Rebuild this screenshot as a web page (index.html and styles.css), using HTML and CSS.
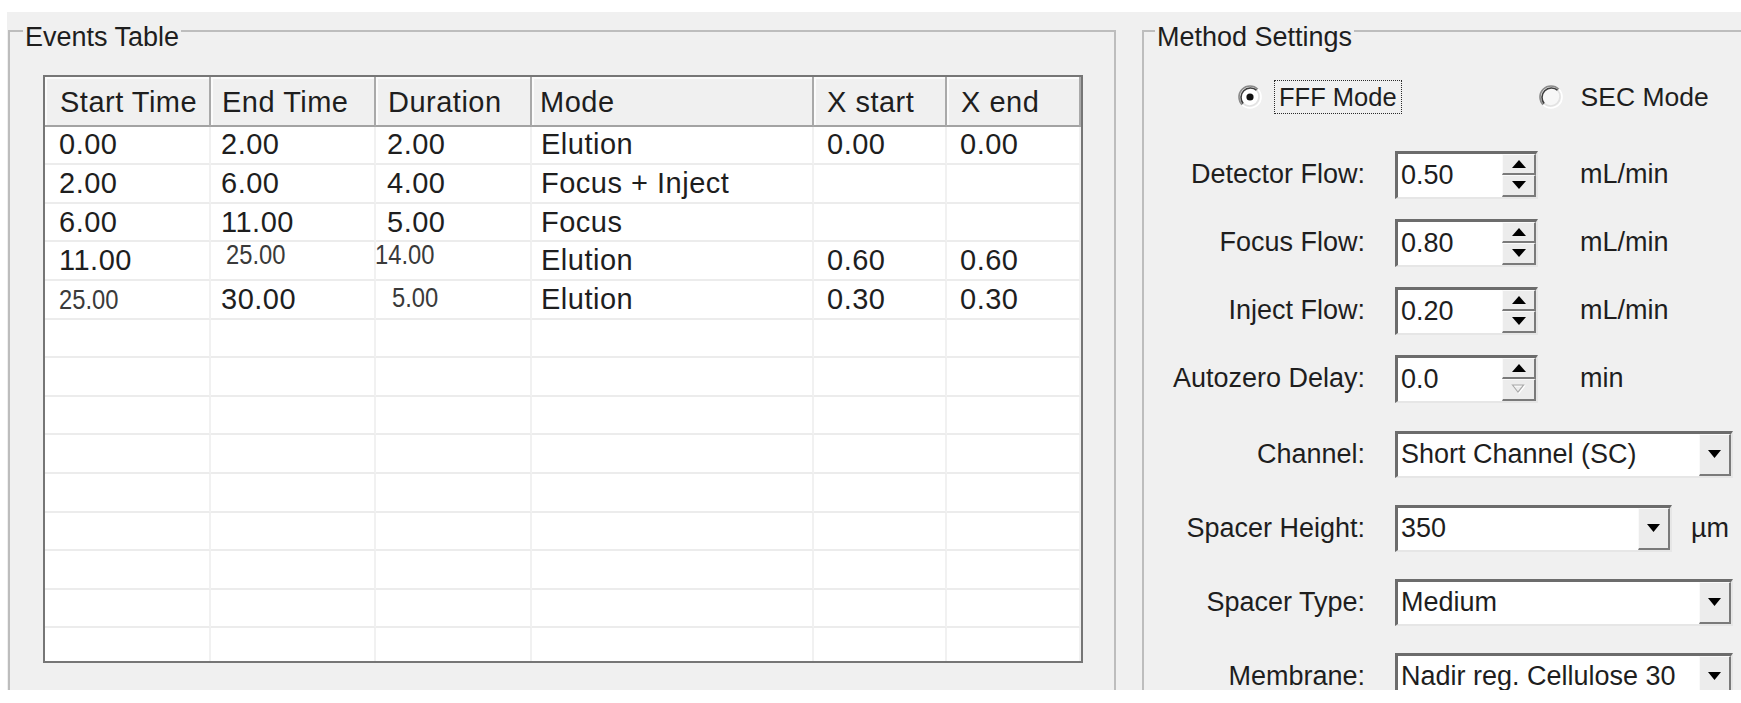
FILE: index.html
```html
<!DOCTYPE html>
<html>
<head>
<meta charset="utf-8">
<title>Method</title>
<link rel="stylesheet" href="styles.css">
</head>
<body>
<div class="window">
  <fieldset class="group events">
    <legend>Events Table</legend>
    <div class="listview">
      <table class="grid">
        <colgroup>
          <col class="c1"><col class="c2"><col class="c3"><col class="c4"><col class="c5"><col class="c6">
        </colgroup>
        <thead>
          <tr><th>Start Time</th><th>End Time</th><th>Duration</th><th>Mode</th><th>X start</th><th>X end</th></tr>
        </thead>
        <tbody>
          <tr><td>0.00</td><td>2.00</td><td>2.00</td><td>Elution</td><td>0.00</td><td>0.00</td></tr>
          <tr><td>2.00</td><td>6.00</td><td>4.00</td><td>Focus + Inject</td><td></td><td></td></tr>
          <tr><td>6.00</td><td>11.00</td><td>5.00</td><td>Focus</td><td></td><td></td></tr>
          <tr><td>11.00</td><td><span class="edit up nudge-r">25.00</span></td><td><span class="edit up nudge-l">14.00</span></td><td>Elution</td><td>0.60</td><td>0.60</td></tr>
          <tr><td><span class="edit">25.00</span></td><td>30.00</td><td><span class="edit up-s nudge-r">5.00</span></td><td>Elution</td><td>0.30</td><td>0.30</td></tr>
          <tr><td></td><td></td><td></td><td></td><td></td><td></td></tr>
          <tr><td></td><td></td><td></td><td></td><td></td><td></td></tr>
          <tr><td></td><td></td><td></td><td></td><td></td><td></td></tr>
          <tr><td></td><td></td><td></td><td></td><td></td><td></td></tr>
          <tr><td></td><td></td><td></td><td></td><td></td><td></td></tr>
          <tr><td></td><td></td><td></td><td></td><td></td><td></td></tr>
          <tr><td></td><td></td><td></td><td></td><td></td><td></td></tr>
          <tr><td></td><td></td><td></td><td></td><td></td><td></td></tr>
          <tr><td></td><td></td><td></td><td></td><td></td><td></td></tr>
        </tbody>
      </table>
    </div>
  </fieldset>

  <fieldset class="group method">
    <legend>Method Settings</legend>
    <div class="radios">
      <svg class="radio" viewBox="0 0 24 24" width="24" height="24">
        <circle cx="12" cy="12" r="9" fill="#fff"/>
        <path d="M4.2 19.8 A11 11 0 0 1 19.8 4.2" fill="none" stroke="#8a8a8a" stroke-width="1.6"/>
        <path d="M19.8 4.2 A11 11 0 0 1 4.2 19.8" fill="none" stroke="#ffffff" stroke-width="1.6"/>
        <path d="M5.3 18.7 A9.5 9.5 0 0 1 18.7 5.3" fill="none" stroke="#3c3c3c" stroke-width="1.6"/>
        <path d="M18.7 5.3 A9.5 9.5 0 0 1 5.3 18.7" fill="none" stroke="#e2e2e2" stroke-width="1.6"/>
        <circle cx="12" cy="12" r="3.6" fill="#111"/>
      </svg>
      <span class="rlabel focus">FFF Mode</span>
      <svg class="radio sec" viewBox="0 0 24 24" width="24" height="24">
        <circle cx="12" cy="12" r="9" fill="#f7f7f7"/>
        <path d="M4.2 19.8 A11 11 0 0 1 19.8 4.2" fill="none" stroke="#8a8a8a" stroke-width="1.6"/>
        <path d="M19.8 4.2 A11 11 0 0 1 4.2 19.8" fill="none" stroke="#ffffff" stroke-width="1.6"/>
        <path d="M5.3 18.7 A9.5 9.5 0 0 1 18.7 5.3" fill="none" stroke="#3c3c3c" stroke-width="1.6"/>
        <path d="M18.7 5.3 A9.5 9.5 0 0 1 5.3 18.7" fill="none" stroke="#e2e2e2" stroke-width="1.6"/>
      </svg>
      <span class="rlabel plain">SEC Mode</span>
    </div>

    <div class="rows spins">
      <div class="row">
        <span class="lbl">Detector Flow:</span>
        <div class="spin">
          <span class="val">0.50</span>
          <div class="btns">
            <span class="sbtn"><svg width="14" height="8" viewBox="0 0 14 8"><polygon points="0,8 7,0 14,8" fill="#000"/></svg></span>
            <span class="sbtn"><svg width="14" height="8" viewBox="0 0 14 8"><polygon points="0,0 7,8 14,0" fill="#000"/></svg></span>
          </div>
        </div>
        <span class="unit">mL/min</span>
      </div>
      <div class="row">
        <span class="lbl">Focus Flow:</span>
        <div class="spin">
          <span class="val">0.80</span>
          <div class="btns">
            <span class="sbtn"><svg width="14" height="8" viewBox="0 0 14 8"><polygon points="0,8 7,0 14,8" fill="#000"/></svg></span>
            <span class="sbtn"><svg width="14" height="8" viewBox="0 0 14 8"><polygon points="0,0 7,8 14,0" fill="#000"/></svg></span>
          </div>
        </div>
        <span class="unit">mL/min</span>
      </div>
      <div class="row">
        <span class="lbl">Inject Flow:</span>
        <div class="spin">
          <span class="val">0.20</span>
          <div class="btns">
            <span class="sbtn"><svg width="14" height="8" viewBox="0 0 14 8"><polygon points="0,8 7,0 14,8" fill="#000"/></svg></span>
            <span class="sbtn"><svg width="14" height="8" viewBox="0 0 14 8"><polygon points="0,0 7,8 14,0" fill="#000"/></svg></span>
          </div>
        </div>
        <span class="unit">mL/min</span>
      </div>
      <div class="row">
        <span class="lbl">Autozero Delay:</span>
        <div class="spin">
          <span class="val">0.0</span>
          <div class="btns">
            <span class="sbtn"><svg width="14" height="8" viewBox="0 0 14 8"><polygon points="0,8 7,0 14,8" fill="#000"/></svg></span>
            <span class="sbtn"><svg width="15" height="10" viewBox="0 0 15 10"><polygon points="1.5,1 7,8 12.5,1" fill="none" stroke="#ffffff" stroke-width="1.2" transform="translate(1,1)"/><polygon points="1.5,1 7,8 12.5,1" fill="none" stroke="#a8a8a8" stroke-width="1.2"/></svg></span>
          </div>
        </div>
        <span class="unit">min</span>
      </div>
    </div>

    <div class="rows combos">
      <div class="row">
        <span class="lbl">Channel:</span>
        <div class="combo">
          <span class="val">Short Channel (SC)</span>
          <span class="dbtn"><svg width="13" height="8" viewBox="0 0 13 8"><polygon points="0,0 6.5,8 13,0" fill="#000"/></svg></span>
        </div>
      </div>
      <div class="row">
        <span class="lbl">Spacer Height:</span>
        <div class="combo short">
          <span class="val">350</span>
          <span class="dbtn"><svg width="13" height="8" viewBox="0 0 13 8"><polygon points="0,0 6.5,8 13,0" fill="#000"/></svg></span>
        </div>
        <span class="unit um">µm</span>
      </div>
      <div class="row">
        <span class="lbl">Spacer Type:</span>
        <div class="combo">
          <span class="val">Medium</span>
          <span class="dbtn"><svg width="13" height="8" viewBox="0 0 13 8"><polygon points="0,0 6.5,8 13,0" fill="#000"/></svg></span>
        </div>
      </div>
      <div class="row">
        <span class="lbl">Membrane:</span>
        <div class="combo">
          <span class="val">Nadir reg. Cellulose 30</span>
          <span class="dbtn"><svg width="13" height="8" viewBox="0 0 13 8"><polygon points="0,0 6.5,8 13,0" fill="#000"/></svg></span>
        </div>
      </div>
    </div>
  </fieldset>
</div>
</body>
</html>
```

FILE: styles.css
```css
html, body {
  margin: 0;
  padding: 0;
  width: 1741px;
  height: 703px;
  overflow: hidden;
  background: #ffffff;
}

body {
  font-family: "Liberation Sans", Arial, sans-serif;
  color: #1e1e1e;
}

.window {
  margin: 12px 0 0 7px;
  height: 678px;
  background: #f0f0f0;
  display: flex;
  align-items: flex-start;
  overflow: hidden;
}

.group {
  margin: -2px 0 0 0;
  padding: 0;
  border: 2px solid #bdbdbd;
  box-sizing: border-box;
  flex-shrink: 0;
  min-inline-size: 0;
  height: 760px;
}

.group > legend {
  font-size: 27px;
  line-height: 30px;
  padding: 11.6px 2px 0 2px;
  color: #1e1e1e;
}

.events {
  margin-left: 1px;
  width: 1108px;
  padding-left: 33px;
}

.events > legend {
  margin-left: -20px;
}

.method {
  margin-left: 26px;
  width: 660px;
}

.method > legend {
  margin-left: 11px;
}

/* ---------- list view ---------- */
.listview {
  margin-top: 23px;
  width: 1040px;
  height: 588px;
  box-sizing: border-box;
  border: 2px solid #767676;
  background: #ffffff;
  overflow: hidden;
}

.grid {
  border-collapse: separate;
  border-spacing: 0;
  table-layout: fixed;
  width: 1036px;
  font-size: 29px;
  letter-spacing: 0.5px;
}

.c1 { width: 166px; }
.c2 { width: 165px; }
.c3 { width: 156px; }
.c4 { width: 282px; }
.c5 { width: 133px; }
.c6 { width: 134px; }

.grid th {
  height: 45px;
  padding: 3px 0 0 12px;
  background: #f0f0f0;
  border-right: 2px solid #a9a9a9;
  border-bottom: 2px solid #a3a3a3;
  box-shadow: inset 2px 2px 0 #fbfbfb;
  font-weight: normal;
  text-align: left;
  white-space: nowrap;
  overflow: hidden;
}

.grid th:nth-child(1) { padding-left: 15px; }
.grid th:nth-child(2) { padding-left: 11px; }
.grid th:nth-child(3) { padding-left: 12px; }
.grid th:nth-child(4) { padding-left: 8px; }
.grid th:nth-child(5) { padding-left: 13px; }
.grid th:nth-child(6) { padding-left: 14px; }

.grid td {
  height: 36.6px;
  padding: 0 0 0 13px;
  border-bottom: 2px solid #ececec;
  border-right: 2px solid #f1f1f1;
  white-space: nowrap;
  vertical-align: middle;
}

.grid td:nth-child(1) { padding-left: 14px; }
.grid td:nth-child(2) { padding-left: 10px; }
.grid td:nth-child(3) { padding-left: 11px; }
.grid td:nth-child(4) { padding-left: 9px; }

.edit {
  display: inline-block;
  color: #3a3a3a;
  letter-spacing: 0;
  transform: scaleX(0.88);
  transform-origin: left center;
  font-size: 27px;
}

.edit.up { transform: translateY(-6px) scaleX(0.88); }
.edit.up-s { transform: translateY(-2px) scaleX(0.88); }
.nudge-r { margin-left: 5px; }
.nudge-l { margin-left: -12px; }

/* ---------- method settings ---------- */
.radios {
  display: flex;
  align-items: center;
  height: 34px;
  margin-top: 28px;
  padding-left: 94px;
  font-size: 25.5px;
}

.radio {
  flex-shrink: 0;
  display: block;
}

.radio.sec {
  margin-left: 137px;
}

.rlabel {
  margin-left: 12px;
  padding: 0 4px;
  line-height: 32px;
  border: 1px dotted #2a2a2a;
  white-space: nowrap;
}

.rlabel.plain {
  border-color: transparent;
  margin-left: 13px;
  font-size: 26.5px;
}

.rows {
  display: flex;
  flex-direction: column;
}

.spins {
  gap: 20px;
  margin-top: 37px;
}

.combos {
  gap: 27px;
  margin-top: 28px;
}

.row {
  display: flex;
  align-items: center;
  font-size: 27px;
  white-space: nowrap;
}

.lbl {
  width: 221px;
  flex-shrink: 0;
  text-align: right;
  margin-right: 30px;
}

.spin,
.combo {
  display: flex;
  align-items: stretch;
  box-sizing: border-box;
  background: #ffffff;
  border-style: solid;
  border-width: 3px 2px 2px 3px;
  border-color: #6c6c6c #e6e6e6 #e6e6e6 #6c6c6c;
  flex-shrink: 0;
}

.spin {
  width: 143px;
  height: 48px;
}

.combo {
  width: 338px;
  height: 47px;
}

.combo.short {
  width: 277px;
}

.val {
  flex: 1;
  padding-left: 3px;
  display: flex;
  align-items: center;
  overflow: hidden;
}

.btns {
  width: 34px;
  display: flex;
  flex-direction: column;
}

.sbtn {
  flex: 1;
  display: flex;
  align-items: center;
  justify-content: center;
  background: #ececec;
  border-style: solid;
  border-width: 1px 2px 2px 1px;
  border-color: #fafafa #7a7a7a #7a7a7a #fafafa;
}

.dbtn {
  width: 32px;
  display: flex;
  align-items: center;
  justify-content: center;
  background: #ececec;
  border-style: solid;
  border-width: 1px 2px 2px 1px;
  border-color: #fafafa #7a7a7a #7a7a7a #fafafa;
  box-sizing: border-box;
}

.unit {
  margin-left: 42px;
}

.unit.um {
  margin-left: 19px;
}
```
